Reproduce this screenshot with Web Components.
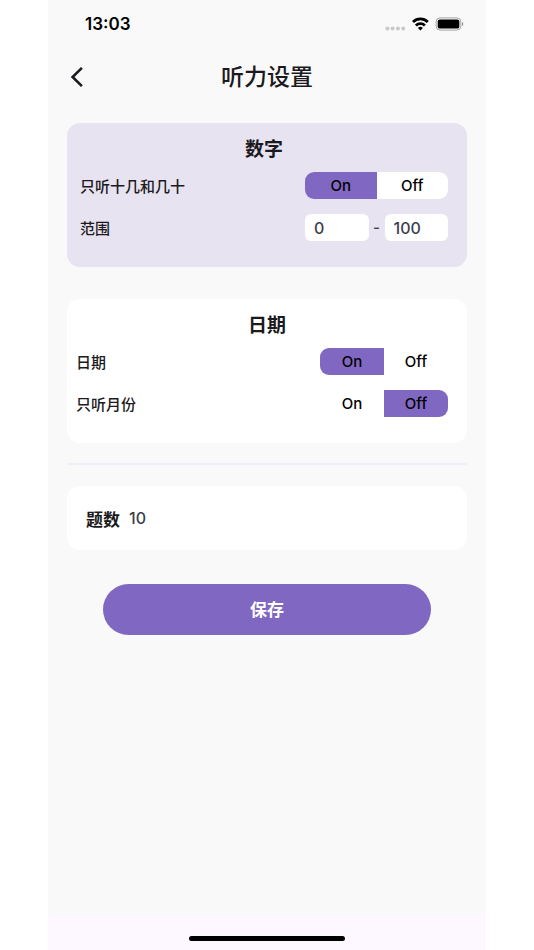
<!DOCTYPE html>
<html lang="zh-CN">
<head>
<meta charset="utf-8">
<meta name="viewport" content="width=device-width, initial-scale=1">
<title>听力设置</title>
<style>
  body {
    margin: 0;
    background: #fff;
    color: #1b1a20;
    font-family: Inter, "Noto Sans CJK SC", sans-serif;
    font-size: 15px;
    font-weight: 500;
    --accent: #8067c1;
    --ink: #3c3e4c;
  }
</style>
</head>
<body>
<phone-screen>
  <status-bar slot="top" time="13:03"></status-bar>
  <nav-bar slot="top">听力设置</nav-bar>
  <settings-card tinted heading="数字">
    <toggle-row label="只听十几和几十" value="On" style="--toggle-width: 143px"></toggle-row>
    <range-row label="范围" from="0" to="100"></range-row>
  </settings-card>
  <settings-card heading="日期">
    <toggle-row label="日期" value="On"></toggle-row>
    <toggle-row label="只听月份" value="Off"></toggle-row>
  </settings-card>
  <section-divider></section-divider>
  <count-card label="题数" value="10"></count-card>
  <save-button>保存</save-button>
  <home-indicator slot="bottom"></home-indicator>
</phone-screen>

<script>
  const define = (name, render) => customElements.define(name, class extends HTMLElement {
    constructor() {
      super();
      this.attachShadow({ mode: 'open' });
    }
    connectedCallback() {
      this.shadowRoot.innerHTML = '<style>:host, * { box-sizing: border-box; }</style>' + render(this);
    }
  });
  const attr = (el, name) => el.getAttribute(name) || '';

  define('phone-screen', () => `
    <style>
      :host { display: flex; flex-direction: column; min-height: 100vh; margin: 0 48px; background: #f9f9f9; }
      main { flex: 1; padding: 20px 19px 0; }
    </style>
    <slot name="top"></slot>
    <main><slot></slot></main>
    <slot name="bottom"></slot>`);

  define('status-bar', el => `
    <style>
      :host { display: flex; justify-content: space-between; align-items: center; height: 48px; padding: 0 22px 0 37px; color: #000; font-size: 17px; font-weight: 600; }
    </style>
    <time>${attr(el, 'time')}</time>
    <svg width="80" height="20" viewBox="0 0 80 20" role="img" aria-label="Wi-Fi, 电池">
      <g fill="#c9c9c9"><circle cx="3.400" cy="14.500" r="2"/><circle cx="8.600" cy="14.500" r="2"/><circle cx="13.900" cy="14.500" r="2"/><circle cx="19.200" cy="14.500" r="2"/></g>
      <g fill="none" stroke="#000" stroke-width="2.800">
        <path d="M29 7.900a10.700 10.700 0 0 1 14.800 0"/>
        <path d="M31.900 11.500a6.400 6.400 0 0 1 9 0"/>
      </g>
      <path d="M36.400 16.600l-2.500-2.500a3.500 3.500 0 0 1 5 0z"/>
      <rect x="52.200" y="3.900" width="24.600" height="12.200" rx="3.800" fill="none" stroke="#a3a3a3"/>
      <rect x="53.700" y="5.400" width="21.600" height="9.200" rx="2.200"/>
      <path d="M78 8v4.200a2.300 2.300 0 0 0 0-4.200z" fill="#999"/>
    </svg>`);

  define('nav-bar', () => `
    <style>
      :host { display: grid; grid-template-columns: 40px 1fr 40px; align-items: center; height: 52px; padding: 0 10px; margin-top: 3px; }
      button { display: grid; place-items: center; width: 40px; height: 40px; padding: 0; border: 0; background: none; color: #1b1a20; }
      h1 { margin: 0; text-align: center; font-size: 23px; line-height: 32px; font-weight: 500; }
    </style>
    <button type="button" aria-label="返回">
      <svg width="20" height="22" viewBox="0 0 20 22" fill="none" stroke="currentColor" stroke-width="2.600"><path d="M13.900 1.800L4.600 11l9.300 9.200"/></svg>
    </button>
    <h1><slot></slot></h1>`);

  define('settings-card', el => `
    <style>
      :host { display: block; margin-bottom: 20px; padding: 12px 19px 26px 9px; border-radius: 13px; background: #fff; --toggle-width: 128px; }
      :host([tinted]) { margin-bottom: 32px; padding-left: 13px; background: #e7e3f1; }
      h2 { margin: 0 0 7px; font-size: 19px; line-height: 30px; font-weight: 600; text-align: center; }
      :host(:not([tinted])) h2 { padding-left: 10px; }
      div { display: flex; flex-direction: column; gap: 15px; }
    </style>
    <h2>${attr(el, 'heading')}</h2>
    <div><slot></slot></div>`);

  define('toggle-row', el => `
    <style>
      :host { display: block; }
      .row { display: flex; align-items: center; justify-content: space-between; }
      .toggle { display: grid; grid-template-columns: 1fr 1fr; width: var(--toggle-width); height: 27px; border-radius: 9px; overflow: hidden; background: #fff; color: #000; }
      label { display: grid; place-items: center; position: relative; }
      label:has(:checked) { background: var(--accent); }
      input { position: absolute; inset: 0; width: 100%; height: 100%; margin: 0; opacity: 0; }
    </style>
    <div class="row" role="radiogroup" aria-labelledby="name">
      <span id="name">${attr(el, 'label')}</span>
      <div class="toggle">
        ${['On', 'Off'].map(v => `<label><input type="radio" name="choice" value="${v}" ${v === attr(el, 'value') ? 'checked' : ''}>${v}</label>`).join('')}
      </div>
    </div>`);

  define('range-row', el => `
    <style>
      :host { display: flex; align-items: center; justify-content: space-between; }
      .range { display: grid; grid-template-columns: 1fr 16px 1fr; align-items: center; width: 143px; color: var(--ink); text-align: center; }
      input { width: 100%; height: 27px; padding: 0 9px; border: 0; border-radius: 6px; background: #fff; color: var(--ink); font: inherit; font-size: 16px; }
    </style>
    <label for="from">${attr(el, 'label')}</label>
    <div class="range">
      <input id="from" inputmode="numeric" value="${attr(el, 'from')}">
      <span>-</span>
      <input aria-label="${attr(el, 'label')}" inputmode="numeric" value="${attr(el, 'to')}">
    </div>`);

  define('section-divider', () => `
    <style>
      :host { display: block; height: 2px; margin-bottom: 21px; background: #efedf6; }
    </style>`);

  define('count-card', el => `
    <style>
      :host { display: flex; align-items: center; gap: 9px; height: 64px; margin-bottom: 34px; padding: 0 19px; border-radius: 13px; background: #fff; }
      label { font-size: 17px; font-weight: 600; }
      input { flex: 1; min-width: 0; padding: 0; border: 0; background: none; color: var(--ink); font: inherit; font-size: 16px; }
    </style>
    <label for="count">${attr(el, 'label')}</label>
    <input id="count" inputmode="numeric" value="${attr(el, 'value')}">`);

  define('save-button', () => `
    <style>
      :host { display: block; padding: 0 36px; }
      button { width: 100%; height: 51px; padding: 0 0 2px; border: 0; border-radius: 26px; background: var(--accent); color: #fff; font: inherit; font-size: 17px; font-weight: 600; }
    </style>
    <button type="button"><slot></slot></button>`);

  define('home-indicator', () => `
    <style>
      :host { display: flex; justify-content: center; align-items: flex-end; height: 36px; padding-bottom: 9px; background: #fdf7ff; }
      span { width: 156px; height: 5px; border-radius: 3px; background: #000; }
    </style>
    <span></span>`);
</script>
</body>
</html>
